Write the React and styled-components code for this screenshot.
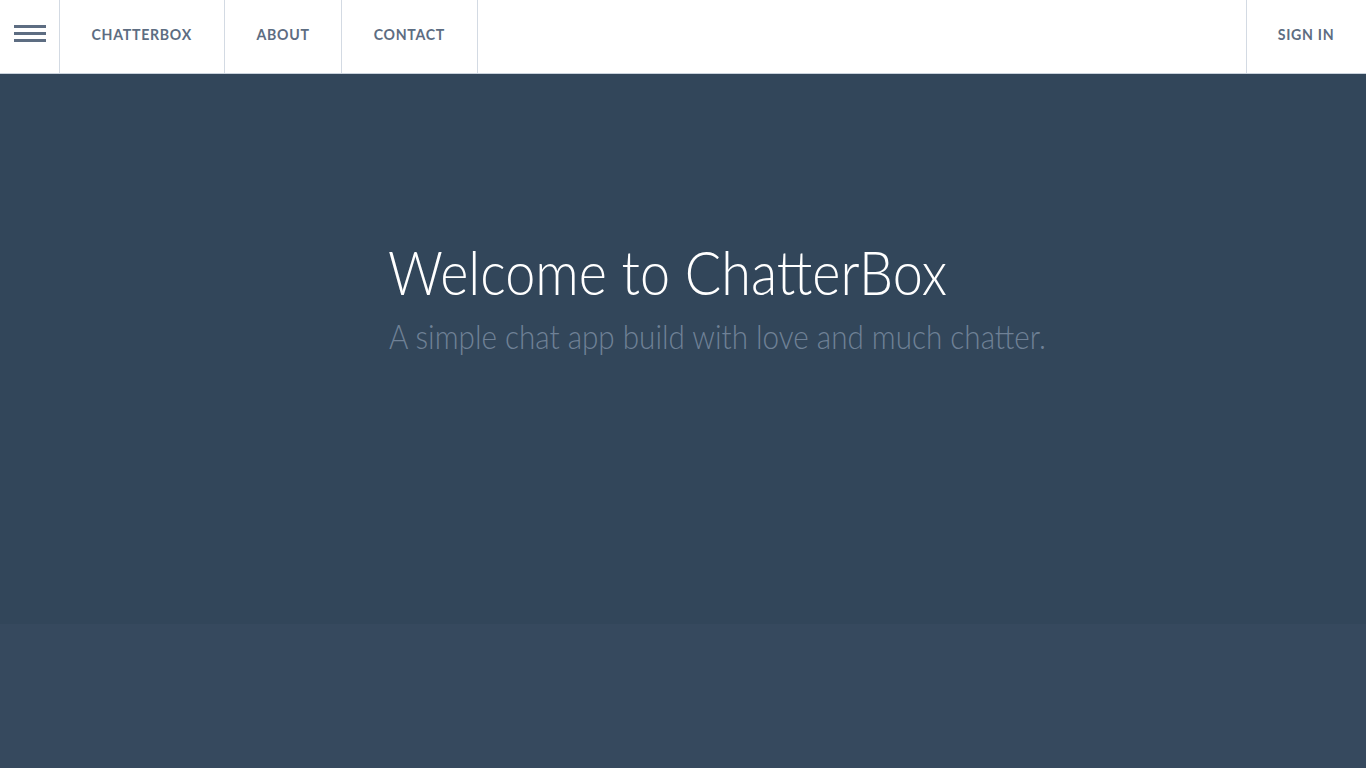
import React from "react";
import styled, { createGlobalStyle } from "styled-components";

const Global = createGlobalStyle`
  html, body { margin: 0; padding: 0; }
  body { font-family: Lato, "Open Sans", sans-serif; background: #36495e; }
`;

const Page = styled.div`
  display: flex;
  flex-direction: column;
  min-height: 768px;
`;

const NavBar = styled.nav`
  display: flex;
  align-items: stretch;
  height: 73px;
  background: #fff;
  border-bottom: 1px solid #c9d2dc;
`;

const NavItem = styled.a`
  display: flex;
  align-items: center;
  justify-content: center;
  box-sizing: border-box;
  width: ${(p) => p.$w}px;
  padding-bottom: 7px;
  border-right: ${(p) => (p.$right ? "none" : "1px solid #d3dae3")};
  border-left: ${(p) => (p.$right ? "1px solid #d3dae3" : "none")};
  font-family: Lato, sans-serif;
  font-weight: 700;
  font-size: 16px;
  letter-spacing: 0.8px;
  color: #5d6d82;
  text-transform: uppercase;
  text-decoration: none;
  cursor: pointer;
  white-space: nowrap;
`;

const Squeeze = styled.span`
  display: inline-block;
  transform: scaleX(0.885);
  transform-origin: ${(p) => (p.$left ? "left center" : "center")};
`;

const Spacer = styled.div`
  flex: 1;
`;

const Hero = styled.section`
  height: 550px;
  background: #32465a;
  display: flex;
  flex-direction: column;
  align-items: flex-start;
  padding: 162px 0 0 388px;
  box-sizing: border-box;
`;

const Title = styled.h1`
  margin: 0;
  font-family: Lato, sans-serif;
  font-weight: 300;
  font-size: 61px;
  line-height: 72px;
  color: #fff;
  white-space: nowrap;
`;

const Subtitle = styled.p`
  margin: 8px 0 0 1px;
  font-family: Lato, sans-serif;
  font-weight: 300;
  font-size: 33.5px;
  line-height: 40px;
  color: #6f8196;
  white-space: nowrap;
`;

const Lower = styled.section`
  flex: 1;
  background: #36495e;
`;

function Hamburger() {
  return (
    <svg width="32" height="17" viewBox="0 0 32 17">
      <rect x="0" y="0" width="32" height="3" fill="#5d6d82" />
      <rect x="0" y="7" width="32" height="3" fill="#5d6d82" />
      <rect x="0" y="14" width="32" height="3" fill="#5d6d82" />
    </svg>
  );
}

export default function App() {
  return (
    <Page>
      <Global />
      <NavBar>
        <NavItem $w={60}>
          <Hamburger />
        </NavItem>
        <NavItem $w={165}><Squeeze>ChatterBox</Squeeze></NavItem>
        <NavItem $w={117}><Squeeze>About</Squeeze></NavItem>
        <NavItem $w={136}><Squeeze>Contact</Squeeze></NavItem>
        <Spacer />
        <NavItem $w={120} $right><Squeeze>Sign In</Squeeze></NavItem>
      </NavBar>
      <Hero>
        <Title><Squeeze $left>Welcome to ChatterBox</Squeeze></Title>
        <Subtitle><Squeeze $left>A simple chat app build with love and much chatter.</Squeeze></Subtitle>
      </Hero>
      <Lower />
    </Page>
  );
}
